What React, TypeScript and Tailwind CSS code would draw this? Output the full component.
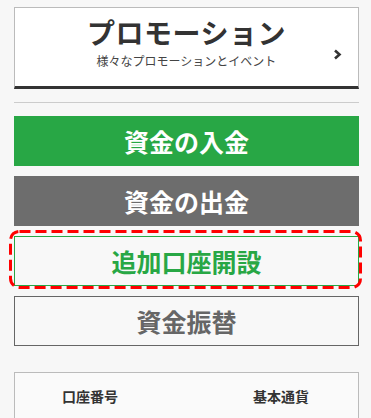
import React from "react";

export default function App() {
  const font = { fontFamily: '"Noto Sans CJK JP", "Noto Sans", sans-serif' };
  return (
    <div className="w-[371px] min-h-[418px] bg-[#f7f7f7] pl-[14px] pr-[12px] pt-[7px] overflow-hidden" style={font}>
      <div className="relative h-[82px] bg-white border border-[#bbbbbb] border-b-[3px] border-b-[#333333] flex flex-col items-center pt-[10px]">
        <div className="text-[28px] leading-[28px] font-bold text-[#333333] tracking-[0.5px]">プロモーション</div>
        <div className="mt-[9px] text-[12px] leading-[12px] text-[#444444]">様々なプロモーションとイベント</div>
        <svg className="absolute right-[16px] top-[41px]" width="9" height="11" viewBox="0 0 9 11">
          <polyline points="2,1.5 6.5,5.5 2,9.5" fill="none" stroke="#333" strokeWidth="2.6" strokeLinecap="butt" strokeLinejoin="miter" />
        </svg>
      </div>
      <div className="mt-[13px] h-px bg-[#cccccc]" />
      <div className="mt-[13px] flex flex-col gap-[10px]">
        <button className="h-[50px] w-full bg-[#28a745] text-white text-[25px] font-bold leading-none">資金の入金</button>
        <button className="h-[50px] w-full bg-[#6d6d6d] text-white text-[25px] font-bold leading-none">資金の出金</button>
        <div className="relative">
          <button className="h-[50px] w-full bg-[#f8f8f8] border border-[#28a745] text-[#28a745] text-[25px] font-bold leading-none">追加口座開設</button>
          <svg className="pointer-events-none absolute -top-[6px] -left-[5px]" width="353" height="59" viewBox="0 0 353 59">
            <rect x="1.5" y="1.5" width="350" height="56" rx="9" ry="9" fill="none" stroke="#ff0000" strokeWidth="3" strokeDasharray="11 5" />
          </svg>
        </div>
        <button className="h-[50px] w-full bg-[#f8f8f8] border border-[#666666] text-[#666666] text-[25px] font-bold leading-none">資金振替</button>
      </div>
      <div className="mt-[26px] h-[80px] border border-[#bbbbbb] bg-[#fafafa]">
        <div className="flex items-center h-[46px] text-[14px] font-bold text-[#333333]">
          <div className="w-[150px] text-center">口座番号</div>
          <div className="ml-auto w-[154px] text-center">基本通貨</div>
        </div>
      </div>
    </div>
  );
}
